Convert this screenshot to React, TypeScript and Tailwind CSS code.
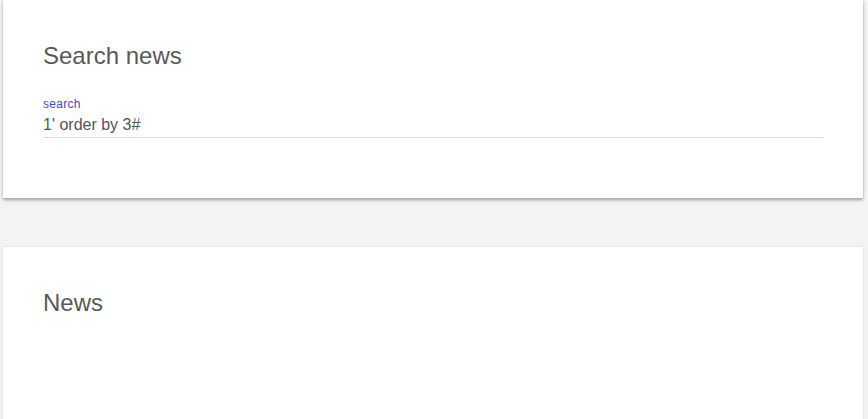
import React from "react";

export default function App() {
  return (
    <div className="h-[419px] overflow-hidden bg-[#f3f3f3] pl-[3px] pr-[5px]" style={{ fontFamily: '"Liberation Sans", Arial, sans-serif' }}>
      <div className="h-[198px] bg-white px-[40px] pt-[40px] shadow-[0_2px_3px_rgba(0,0,0,0.35)]">
        <h2 className="text-[24px] leading-[32px] text-[#595959]">Search news</h2>
        <div className="mt-[25px] flex flex-col">
          <label className="text-[12px] leading-[14px] tracking-[0.3px] text-[#3f51b5]">search</label>
          <input
            className="h-[27px] border-b border-[#dddddd] bg-transparent pt-[1px] text-[16px] text-[#555555] outline-none"
            defaultValue="1' order by 3#"
          />
        </div>
      </div>
      <div className="mt-[49px] h-[200px] bg-white px-[40px] pt-[40px] shadow-[0_0_2px_rgba(0,0,0,0.12)]">
        <h2 className="text-[24px] leading-[32px] text-[#595959]">News</h2>
      </div>
    </div>
  );
}
